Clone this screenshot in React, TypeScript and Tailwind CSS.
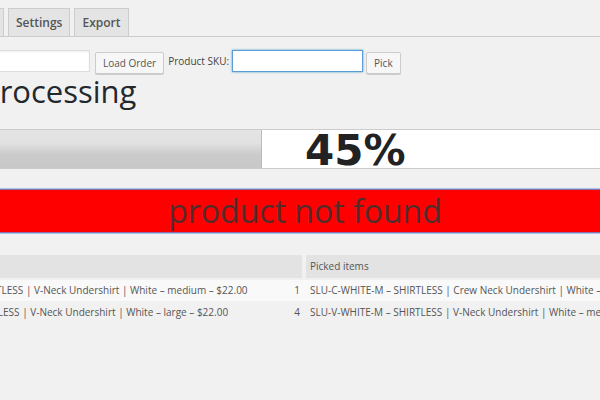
import React from "react";

const rows = [
  {
    item: "SLU-V-WHITE-M – SHIRTLESS | V-Neck Undershirt | White – medium – $22.00",
    qty: "1",
    picked: "SLU-C-WHITE-M – SHIRTLESS | Crew Neck Undershirt | White – medium – $22.00",
    bg: "bg-[#f9f9f9]",
  },
  {
    item: "SLU-V-WHITE-L – SHIRTLESS | V-Neck Undershirt | White – large – $22.00",
    qty: "4",
    picked: "SLU-V-WHITE-M – SHIRTLESS | V-Neck Undershirt | White – medium – $22.00",
    bg: "bg-[#f1f1f1]",
  },
];

function Tab({ label, className = "" }: { label: string; className?: string }) {
  return (
    <div
      className={`h-[28px] border border-b-0 border-[#ccc] bg-[#e4e4e4] px-[7px] text-[12px] font-semibold leading-[27px] text-[#555] whitespace-nowrap ${className}`}
    >
      {label}
    </div>
  );
}

function Button({ label }: { label: string }) {
  return (
    <button className="h-[22px] rounded-[2px] border border-[#ccc] bg-[#f7f7f7] px-[7px] text-[10px] leading-[20px] text-[#555] shadow-[0_1px_0_#ccc]">
      {label}
    </button>
  );
}

export default function App() {
  return (
    <div className="w-[600px] h-[400px] overflow-hidden bg-[#f1f1f1] font-['Open_Sans',sans-serif] text-[#555]">
      <div className="-ml-[120px] w-[1100px]">
        {/* Tabs */}
        <div className="flex h-[37px] items-end gap-[4px] border-b border-[#ccc] pl-[54px] pt-[8px]">
          <Tab label="Pick" className="w-[70px] overflow-hidden pr-[30px] text-right" />
          <Tab label="Settings" />
          <Tab label="Export" />
        </div>

        {/* Order / SKU form */}
        <div className="mt-[13px] flex h-[22px] items-center">
          <input className="ml-[60px] h-[22px] w-[150px] border border-[#ddd] bg-white shadow-[inset_0_1px_2px_rgba(0,0,0,0.07)] outline-none" />
          <div className="ml-[5px]">
            <Button label="Load Order" />
          </div>
          <span className="ml-[4px] text-[10px] text-[#444]">Product SKU:</span>
          <input className="ml-[3px] h-[22px] w-[131px] border border-[#5b9dd9] bg-white shadow-[0_0_2px_rgba(30,140,190,0.8)] outline-none" />
          <div className="ml-[3px]">
            <Button label="Pick" />
          </div>
        </div>

        {/* Heading */}
        <h1 className="ml-[101px] text-[31px] font-normal leading-[38px] text-[#23282d]">Processing</h1>

        {/* Progress */}
        <div className="relative mt-[19px] flex h-[40px] w-[952px] border-y border-[#ccc] bg-white">
          <div className="h-full w-[382px] border-r border-[#bbb] bg-[linear-gradient(to_bottom,#e4e4e4_0%,#e1e1e1_35%,#cbcbcb_65%,#c8c8c8_100%)]" />
          <div className="absolute left-[425px] top-[2px] flex h-full items-center font-['DejaVu_Sans',sans-serif] text-[42px] font-bold leading-none text-[#222]">
            45%
          </div>
        </div>

        {/* Error */}
        <div className="mt-[19px] flex h-[46px] w-[850px] items-center justify-center border-y border-[#a9c3ec] bg-[#ff0000] shadow-[inset_0_1px_0_#8b6ea8,inset_0_-1px_0_#8b6ea8]">
          <span className="text-[32px] font-medium leading-none text-[#552c2c]">product not found</span>
        </div>

        {/* Table */}
        <div className="mt-[21px] text-[10px] text-[#555]">
          <div className="flex h-[23px]">
            <div className="w-[422px] bg-[#e3e3e3]" />
            <div className="ml-[4px] flex flex-1 items-center bg-[#e3e3e3] pl-[4px]">Picked items</div>
          </div>
          {rows.map((r, i) => (
            <div key={i} className={`flex h-[21px] items-center whitespace-nowrap ${r.bg} ${i === 0 ? "mt-[2px]" : "mt-[1px]"}`}>
              <div className="flex w-[422px] justify-between pl-[11px] pr-[2px]">
                <span>{r.item}</span>
                <span>{r.qty}</span>
              </div>
              <div className="pl-[8px]">{r.picked}</div>
            </div>
          ))}
        </div>
      </div>
    </div>
  );
}
